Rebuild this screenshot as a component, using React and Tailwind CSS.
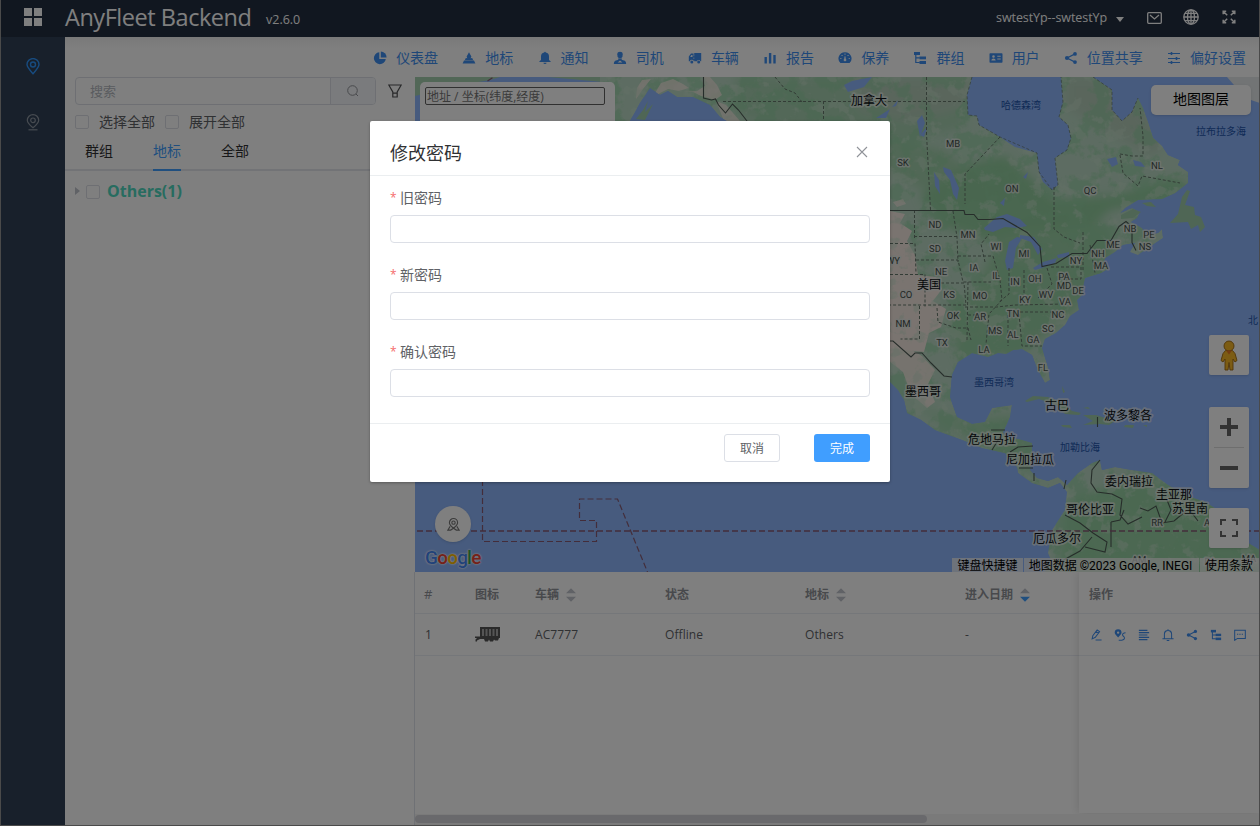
import React from "react";

const CJK = "font-['Open_Sans','Noto_Sans_CJK_SC',sans-serif]";

function Svg({ children, className = "", box = "0 0 14 14" }) {
  return (
    <svg viewBox={box} className={className} fill="none" stroke="none">
      {children}
    </svg>
  );
}

const NAV_ICONS = {
  pie: (
    <g fill="currentColor">
      <path d="M6.3 1.2A6 6 0 1 0 12.8 7.9H6.3z" />
      <path d="M7.8 .6v5.8h5.8A6 6 0 0 0 7.8 .6z" />
    </g>
  ),
  landmark: (
    <g fill="currentColor">
      <path d="M7 1.2 9.4 5.6 8.6 7.2 10.2 7 11.2 9.2H2.8L3.8 7 5.3 7.2 4.6 5.6z" />
      <path d="M2 9.4H12L13.4 12.4H.6z" />
    </g>
  ),
  bell: (
    <g fill="currentColor">
      <path d="M6.2 1.6a.8.8 0 0 1 1.6 0A4 4 0 0 1 11 5.6V9l1.6 1.2v.8H1.4v-.8L3 9V5.6a4 4 0 0 1 3.2-4z" />
      <path d="M5.4 11.8h3.2a1.6 1.3 0 0 1-3.2 0z" />
    </g>
  ),
  driver: (
    <g fill="currentColor">
      <path d="M4.3 3.2C4.3 1.6 5.4.8 7 .8s2.700.8 2.700 2.400L9.500 5.200C9.200 6.600 8.200 7.300 7 7.300S4.800 6.600 4.500 5.200z" />
      <path fillRule="evenodd" d="M5 7.500h4l-.4 1.300 3.200 1Q13.200 10.500 13.200 13H.8Q.8 10.500 2.200 9.800l3.200-1zM7 9.600 4.600 11.600h4.800z" />
    </g>
  ),
  truck: (
    <g fill="currentColor">
      <path d="M6.200 2h7v8.300h-.700a1.900 1.900 0 0 0-3.600 0H6.200z" />
      <path fillRule="evenodd" d="M5.600 2.400H3L.8 5.600v4.700h1.100a1.900 1.900 0 0 1 3.700 0zM4.500 4v2H2.200L3.400 4z" />
      <circle cx="3.800" cy="11" r="1.500" />
      <circle cx="10.700" cy="11" r="1.500" />
      <path d="M5 5.200h3v1.200H5zM5 8h4v1.200H5z" />
    </g>
  ),
  bars: (
    <g fill="currentColor">
      <rect x="1.500" y="6" width="2.400" height="6.500" />
      <rect x="5.900" y="2" width="2.400" height="10.500" />
      <rect x="10.300" y="4" width="2.400" height="8.500" />
    </g>
  ),
  gauge: (
    <path
      fill="currentColor"
      fillRule="evenodd"
      d="M7 1.200A6.300 6.300 0 0 0 2.400 12H11.600A6.300 6.300 0 0 0 7 1.200zM6.500 2.600h1v1.100h-1zM3.500 3.900h1.100V5H3.500zM9.500 3.900h1.100V5H9.500zM2.300 7h1.100v1H2.300zM10.700 7h1.100v1h-1.100zM6.600 5.200h.8l.4 2.700a1.300 1.300 0 1 1-1.600 0z"
    />
  ),
  tree: (
    <g fill="currentColor">
      <rect x="1" y="1" width="6" height="3" />
      <rect x="6.500" y="5.500" width="6.500" height="2.800" />
      <rect x="6.500" y="10" width="6.500" height="3" />
      <path d="M2.200 3.500h1.200v2.800h3.400v1.200H3.400v3.400h3.400v1.200H2.200z" />
    </g>
  ),
  card: (
    <path
      fill="currentColor"
      fillRule="evenodd"
      d="M1.200 2.200h11.600q.700 0 .700.700v8.200q0 .700-.700.700H1.200q-.700 0-.700-.700V2.900q0-.700.700-.700zM4.500 4.200a1.300 1.300 0 0 0 0 2.600 1.300 1.300 0 0 0 0-2.600zM2.300 9.400h4.400q-.200-2-2.200-2t-2.200 2zM8.300 4.800v1h3.400v-1zM8.300 7.400v1h3.400v-1z"
    />
  ),
  share: (
    <g fill="currentColor">
      <circle cx="3" cy="7" r="2.100" />
      <circle cx="11" cy="2.900" r="1.900" />
      <circle cx="11" cy="11.100" r="1.900" />
      <path d="M3 7 11 2.900M3 7l8 4.100" stroke="currentColor" strokeWidth="1.200" />
    </g>
  ),
  sliders: (
    <g stroke="currentColor">
      <path d="M1 2.500h12M1 7.500h12M1 11.500h12" strokeWidth="1" />
      <path d="M4.500 1v3M9.500 6v3M4.500 10v3" strokeWidth="1.600" />
    </g>
  ),
};

const NAV = [
  ["pie", "仪表盘"],
  ["landmark", "地标"],
  ["bell", "通知"],
  ["driver", "司机"],
  ["truck", "车辆"],
  ["bars", "报告"],
  ["gauge", "保养"],
  ["tree", "群组"],
  ["card", "用户"],
  ["share", "位置共享"],
  ["sliders", "偏好设置"],
];

function Header() {
  return (
    <header className="flex h-[37px] shrink-0 items-center bg-[#222e40] text-white">
      <svg viewBox="0 0 18 18" className="ml-[23px] mb-[3px] h-[18px] w-[18px]" fill="#fff">
        <rect width="8" height="8" />
        <rect x="10" width="8" height="8" />
        <rect y="10" width="8" height="8" />
        <rect x="10" y="10" width="8" height="8" />
      </svg>
      <div className="ml-[23px] mb-[4px] w-[201px] whitespace-nowrap text-[23.500px] leading-8 tracking-[-0.460px]">AnyFleet Backend</div>
      <div className="mt-1 text-[12.500px]">v2.6.0</div>
      <div className="ml-auto flex items-center">
        <span className="text-[12.500px] tracking-[-0.080px]">swtestYp--swtestYp</span>
        <svg viewBox="0 0 8 5" className="ml-[9px] mt-px h-[5px] w-2" fill="#fff"><path d="M0 0h8L4 5z" /></svg>
        <svg viewBox="0 0 15 12" className="ml-[23px] mb-[2px] h-3 w-[15px]" fill="none" stroke="#fff" strokeWidth="1.300">
          <rect x=".7" y=".7" width="13.600" height="10.600" rx="1" />
          <path d="m3 3 4.500 4L12 3" />
        </svg>
        <svg viewBox="0 0 16 16" className="ml-[21px] mb-[3px] h-4 w-4" fill="none" stroke="#fff" strokeWidth="1.300">
          <circle cx="8" cy="8" r="7.200" />
          <ellipse cx="8" cy="8" rx="3.500" ry="7.200" />
          <path d="M8 .8v14.400M.8 8h14.400M2 4.300h12M2 11.700h12" />
        </svg>
        <svg viewBox="0 0 14 14" className="ml-[23px] mr-[23px] mb-[3px] h-[14px] w-[14px]" fill="none" stroke="#fff" strokeWidth="1.500">
          <path d="m5.200 5.200-4-4m0 3V1.200h3M8.800 5.200l4-4m-3 0h3v3M5.200 8.800l-4 4m0-3v3h3M8.800 8.800l4 4m0-3v3h-3" />
        </svg>
      </div>
    </header>
  );
}

function Sidebar() {
  return (
    <aside className="flex w-16 shrink-0 flex-col items-center bg-[#304156]">
      <svg viewBox="0 0 14 17" className="mt-[21px] h-[17px] w-[14px]" fill="none" stroke="#2f96ff" strokeWidth="1.400">
        <path d="M7 15.800C3.500 12 1 9.300 1 6.600a6 6 0 0 1 12 0c0 2.700-2.500 5.400-6 9.200z" />
        <circle cx="7" cy="6.500" r="2.500" />
      </svg>
      <svg viewBox="0 0 14 17" className="mt-[39px] h-[17px] w-[14px]" fill="none" stroke="#8f97a3" strokeWidth="1.200">
        <path d="M7 13.800C3.500 11 1.300 8.800 1.300 6.300a5.700 5.700 0 0 1 11.400 0c0 2.500-2.200 4.700-5.700 7.500z" />
        <circle cx="7" cy="6.300" r="2.300" />
        <path d="M2.500 15.800h9" />
      </svg>
    </aside>
  );
}

function Check() {
  return <span className="h-[14px] w-[14px] shrink-0 rounded-[2px] border border-[#dcdfe6] bg-white" />;
}

function Panel() {
  return (
    <section className="w-[350px] shrink-0">
      <div className="flex items-center pl-[10px]">
        <div className="flex h-[28px] w-[301px] overflow-hidden rounded-[4px] border border-[#dcdfe6]">
          <div className="flex-1 pl-[14px] text-[13px] leading-[27px] text-[#b4b8c0]">搜索</div>
          <div className="flex w-[45px] items-center justify-center border-l border-[#dcdfe6] bg-[#f5f7fa]">
            <svg viewBox="0 0 12 12" className="h-3 w-3" fill="none" stroke="#909399"><circle cx="5.500" cy="5.500" r="4.800" /><path d="m9 9 2 2" /></svg>
          </div>
        </div>
        <svg viewBox="0 0 14 14" className="ml-3 h-[14px] w-[14px]" fill="none" stroke="#505153" strokeWidth="1.200">
          <path d="M.8 1h12.400L9.200 8v5H4.800V8zM4.800 9.200h4.400" />
        </svg>
      </div>
      <div className="flex h-[34px] items-center pl-[10px] text-[14px] text-[#606266]">
        <Check /><span className="mb-[2px] ml-[10px] mr-[10px]">选择全部</span>
        <Check /><span className="mb-[2px] ml-[10px]">展开全部</span>
      </div>
      <div className="flex h-[32px] border-b-2 border-[#e4e7ed] pl-5 text-[14px] leading-[24px] text-[#303133]">
        <span className="h-[32px]">群组</span>
        <span className="mx-10 h-[32px] border-b-2 border-[#409eff] text-[#409eff]">地标</span>
        <span className="h-[32px]">全部</span>
      </div>
      <div className="flex h-[40px] items-center pl-[10px]">
        <svg viewBox="0 0 5 8" className="h-2 w-[5px]" fill="#c0c4cc"><path d="M0 0v8l5-4z" /></svg>
        <span className="ml-[6px] mt-[1px] flex"><Check /></span>
        <span className="ml-[7px] text-[16px] font-bold text-[#4fd8c0]">Others(1)</span>
      </div>
    </section>
  );
}

const MAINLAND =
  "M600 77H1093L1112 90 1112 110 1122 121 1132 112 1138 98 1143 108 1148 122 1153 138 1162 146 1168 155 1180 160 1178 165 1188 172 1188 183 1175 193 1162 199 1138 200 1125 208 1112 222 1100 234 1106 228 1118 214 1132 208 1140 212 1137 218 1131 222 1142 228 1146 235 1158 233 1162 229 1163 238 1148 248 1138 255 1130 252 1135 243 1123 245 1115 252 1105 258 1103 264 1109 268 1101 273 1085 278 1083 287 1082 295 1077 300 1079 310 1070 316 1065 325 1056 333 1045 339 1042 348 1048 367 1050 380 1045 383 1038 370 1032 355 1022 349 1013 350 1006 354 998 353 988 357 972 353 958 362 952 375 950 397 957 417 972 424 985 422 992 408 1012 405 1010 417 1003 432 1005 437 1018 439 1032 443 1032 453 1030 470 1037 478 1048 481 1058 477 1067 485 1078 473 1092 463 1100 460 1102 470 1115 467 1132 470 1152 473 1168 485 1185 495 1205 502 1218 510 1238 537 1260 550V572H1045L1050 558 1048 553 1052 530 1065 510 1067 492 1060 483 1048 488 1032 483 1018 473 1017 467 1005 453 982 448 962 440 935 430 921 420 907 413 904 400 898 390 880 372V121H727L720 117 710 105 693 97 677 97 668 91 660 95 650 88 640 103 630 121H600z";

const LABELS = [
  ["MB", 953, 147], ["SK", 903, 166], ["ON", 1012, 192], ["QC", 1090, 194], ["NL", 1157, 169],
  ["ND", 935, 228], ["MN", 968, 238], ["SD", 935, 252], ["WI", 996, 250], ["MI", 1024, 257],
  ["NB", 1130, 232], ["PE", 1149, 238], ["NS", 1145, 250], ["ME", 1113, 248], ["NH", 1098, 257],
  ["NY", 1076, 264], ["MA", 1101, 269], ["NE", 941, 275], ["IA", 974, 271], ["IL", 996, 279],
  ["IN", 1015, 285], ["OH", 1035, 282], ["PA", 1064, 280], ["MD", 1064, 289], ["DE", 1078, 294],
  ["WV", 1046, 298], ["VA", 1065, 305], ["KY", 1025, 303], ["CO", 906, 298], ["KS", 949, 298],
  ["MO", 980, 299], ["NM", 903, 327], ["OK", 953, 319], ["AR", 980, 320], ["TN", 1013, 317],
  ["NC", 1058, 318], ["SC", 1048, 332], ["MS", 995, 334], ["AL", 1013, 338], ["GA", 1033, 343],
  ["TX", 942, 346], ["LA", 984, 353], ["FL", 1043, 371], ["WY", 893, 264], ["RR", 1157, 526],
  ["AM", 1139, 563], ["A", 1207, 526], ["PA", 1210, 565], ["MA", 1249, 562],
];
const COUNTRIES = [
  ["加拿大", 869, 105], ["美国", 929, 289], ["墨西哥", 923, 396], ["古巴", 1057, 410],
  ["波多黎各", 1128, 420], ["危地马拉", 992, 444], ["尼加拉瓜", 1030, 464], ["委内瑞拉", 1129, 486],
  ["圭亚那", 1174, 499], ["苏里南", 1190, 513], ["哥伦比亚", 1090, 514], ["厄瓜多尔", 1057, 543],
];
const SEAS = [["哈德森湾", 1021, 109], ["拉布拉多海", 1221, 135], ["墨西哥湾", 994, 386], ["加勒比海", 1080, 451], ["北", 1253, 324]];

function MapDrawing() {
  return (
    <svg viewBox="415 77 844 495" className="block h-[495px] w-[844px]">
      <defs>
        <clipPath id="land"><path d={MAINLAND} /></clipPath>
        <filter id="forest" x="0" y="0" width="1" height="1" colorInterpolationFilters="sRGB">
          <feTurbulence type="fractalNoise" baseFrequency="0.045" numOctaves="5" seed="8" />
          <feColorMatrix values="0 0 0 0 .58  0 0 0 0 .82  0 0 0 0 .64  9 0 0 0 -4.300" />
        </filter>
        <filter id="pale" x="0" y="0" width="1" height="1" colorInterpolationFilters="sRGB">
          <feTurbulence type="fractalNoise" baseFrequency="0.07" numOctaves="4" seed="3" />
          <feColorMatrix values="0 0 0 0 .78  0 0 0 0 .88  0 0 0 0 .8  0 9 0 0 -5.200" />
        </filter>
        <filter id="soft"><feGaussianBlur stdDeviation="5" /></filter>
      </defs>
      <rect x="415" y="77" width="845" height="495" fill="#8eb6fc" />
      <path d="M415 77h85l-10 3-35 6-40 10zM548 77h60l-5 5z" fill="#a5cfae" />
      <path d="M600 77h50l-12 20-10 24h-28z" fill="#a5cfae" />
      <path d="M1227 77h33v26l-12-4-14-14z" fill="#e4e8ea" />
      <g clipPath="url(#land)">
        <path d={MAINLAND} fill="#bad9c4" />
        <g filter="url(#soft)">
          <path d="M735 77h230v50l-75 20-155-30z" fill="#a6d0b0" />
          <path d="M885 140l60 10 35 30-8 28-27-10-60-25z" fill="#a3d0ac" />
          <path d="M965 165l40-10 50 45 60-5 50-15 25 0-20 20-60 10-50 50-60-15-60-20-20-30z" fill="#93cd9e" />
          <path d="M1000 235l110-10 5 40-45 50-50 40-60 5-15-50 30-20z" fill="#9bd0a6" />
          <path d="M1065 77h50l50 60-10 20-40-20-50-30z" fill="#b4cdb9" />
          <path d="M850 77h120v30l-60 15-50-10z" fill="#b4cdb9" />
          <path d="M1068 500l60-20 80 10 52 60v30h-205z" fill="#98d1a4" />
          <path d="M905 400l50 20 60-5 30 65-50-25z" fill="#a0d3ab" />
        </g>
        <rect x="600" y="77" width="660" height="495" filter="url(#forest)" opacity=".6" />
        <g fill="#f5e9e1">
          <path d="M885 210l20 4-5 9 12 8-5 10 8 14 3 20 18 2 6 12-9 12 13 8-5 18-12 6-5 19-39-4z" />
          <path d="M885 341l20 5 17 10 13 14-7 14 7 18-8 6-16-14-8-22-18-14z" opacity=".85" />
          <path d="M637 88l5-8 9-1-8 10-7 10zM658 88l3-5 12-4 10 5 6 4-10 3-11-2-8 4-8 6zM683 92l14-1 8-5-2-9h7l7 8 5 10-7 5-14-4-8-4z" opacity=".75" />
          <path d="M716 101l10 4 14 16h-16zM893 202l10-3 3 5-9 3z" opacity=".7" />
        </g>
        <rect x="600" y="77" width="660" height="495" filter="url(#pale)" opacity=".5" />
      </g>
      {/* inland waters */}
      <g fill="#8eb6fc">
        <path d="M972 77 967 95 968 115 977 116 979 125 1000 137 1015 147 1037 153 1039 172 1043 182 1052 190 1058 185 1055 158 1067 150 1071 138 1068 125 1059 117 1063 102 1061 77z" />
        <path d="M984 228l13-11 10-3 13 5 7 7-10 2-12-1-12 5-8-2zM1009 242l8-5 5 1-6 10-3 20-6 2-2-9zM1020 235l14 2 8 12-4 6-7-13-11-4zM1033 268l10-6 14-4-2 5-13 5-7 2zM1057 255l12-3v5l-11 1z" />
        <path d="M943 167l8 3 8 18-2 12-4-6-3-14-6-8zM934 172l5 8 1 14-5-8zM928 126l-8 9 4 2zM844 85l8-4 20-4-8 10-16 5zM876 118l14-9-4 9zM917 121l5-6 3 8-5 14zM898 100l-6 7 4-1zM1107 159l9-2 2 7-6 3zM1133 160l8 2 4 5-10-1zM1000 203l5-5-1 8zM1028 172l-5 5 3 2z" />
      </g>
      <g fill="#9ecdaa">
        <path d="M1187 190l3 1-5 14 9 2 1 8 6 2 4 10-5 5-2-7-7 4-3-7-18 1 8-9 4-17z" />
        <path d="M1121 215l12-6 8 3-8 6-12 1zM1142 203l9-1 5 5-9-1z" />
        <path d="M1025 401l8-5 15 1 15 6 9 8 9 2-2 2-14-1-7-8-19-7-12 3zM1083 415l13 0 19 6-6 4-9-1-17 1 10-4zM1061 425l9 0 2 3-9-1zM1125 425h9l-1 3-9-1zM1062 386l3 6-2 1zM1143 425l4 0 0 2zM1083 408l5-1 2 2z" />
        <path d="M636 119l7-9 5-9-3 11 8-8-8 16z" />
      </g>
      {/* province and state lines */}
      <g fill="none" stroke="#66796c" strokeWidth="1" strokeDasharray="3 2">
        <path d="M723 101.500H965M823.500 101v20M775 77l10 12 10 4 7 9M926.500 77v57l4 76M1000 137l-35 37v30M1054 187v42l10 8 16 6M953 211l4 26 1 25M914.500 210v30M914 236.500h44M885 243.500h30l1 30M916 260h42l5 22h28M885 274.500h40v32M926 283h38l2 22h-81M919.500 306v33h-19M937 308l1 14 18 6h12l3 12M968 282l-1 58M958 256h35M993 256l7 24 2 20-13 14-4 40M965 307h32l18-2 50-1M968 315h20M1009 268v26l-10 8M1024 270v25M1047 268l5 16-14 14M1051 267h30v12h-15M1020 312h45M1008 315v31M1019 314l3 32h20M985 262l-4-18 8-10M1083 270v-38M1120 154l12 2h11V136l-3-28M1120 155l3 18 15 13 4-10 38 7M1090 245l5 28" />
        <path d="M972 77 967 95 968 115 977 116 979 125 1000 137 1037 153 1039 172 1052 190 1058 185 1055 158 1067 150 1071 138 1068 125 1059 117 1063 102 1061 77M1093 77l19 13v20l10 11 10-9 6-14" strokeOpacity=".7" />
      </g>
      <g fill="none" stroke="#4d5a54" strokeWidth="1.100">
        <path d="M703.500 77v21l8 2 4-1 3 6 7 8 7-9 6 6 10 13M885 210.500h79l1 4 9 0 4 5 12 0 13-1 24 14 13 14 2 20 14-3 16-10 15 0 10-13h14l8-14 7-5 6 5v16l4 8M885 341h8l18 16 4-4h7l9 10 13 13 8 1" />
        <path d="M1005 430h-14M1000 437l-8 13M1010 452l8-5 15-1M1019 468h14M1034 473v8M1064 489l2-9M1100 460l-8 10-1 13 6 9 15 2 10 5-2 16 8 9 14-7M1065 515l15 8 13 10 14 9-2 10-20-5M1060 562l20-11 12-14M1111 522l9-2 4-10M1111 522v25M1140 508l8 3 8-5 6 17 12-2 12-10M1167 500l4 10-6 12M1186 505l12 16M1097.500 417v10" />
      </g>
      {/* time zone boundaries */}
      <g fill="none" stroke="#865b75" strokeDasharray="6 3">
        <path d="M417 531H1260" strokeWidth="1.600" />
        <path d="M482.500 480v61.500h114v-21h-17v-21.500h38l30 73M480 86l15-10" strokeWidth="1.200" />
      </g>
      <g className="font-['Roboto','Noto_Sans_CJK_SC',sans-serif]" textAnchor="middle">
        <g fontSize="9.500" fontWeight="400" fill="#454f4b" stroke="#e6ebe7" strokeWidth="3" strokeOpacity=".75" paintOrder="stroke" strokeLinejoin="round">
          {LABELS.map(([t, x, y], i) => <text key={i} x={x} y={y} style={{ paintOrder: "stroke" }}>{t}</text>)}
        </g>
        <g fontSize="12" fontWeight="400" fill="#0c1014" stroke="#eef2ef" strokeWidth="3.500" strokeOpacity=".65" strokeLinejoin="round">
          {COUNTRIES.map(([t, x, y]) => <text key={t} x={x} y={y} style={{ paintOrder: "stroke" }}>{t}</text>)}
        </g>
        <g fontSize="10" fill="#1e55ac">
          {SEAS.map(([t, x, y]) => <text key={t} x={x} y={y}>{t}</text>)}
        </g>
      </g>
    </svg>
  );
}

function MapView() {
  return (
    <div className="relative h-[495px] shrink-0 overflow-hidden">
      <MapDrawing />
      <div className="absolute left-[5px] top-[5px] h-[60px] w-[195px] rounded-[5px] bg-white p-[5px]">
        <div className="h-[18px] w-[180px] rounded-[2px] border border-[#606060] pl-px text-[12px] leading-[17px] text-[#757575]">地址 / 坐标(纬度,经度)</div>
      </div>
      <div className="absolute right-[8px] top-[8px] h-[30px] w-[100px] rounded-[5px] bg-white text-center text-[14px] leading-[28px] text-black shadow">地图图层</div>
      <div className="absolute left-[20px] top-[429px] flex h-[36px] w-[36px] items-center justify-center rounded-full bg-white shadow">
        <svg viewBox="0 0 14 14" className="h-[13px] w-[13px]" fill="none" stroke="#777" strokeWidth="1.200">
          <path d="M7 11C4 8.500 2.600 7 2.600 5a4.400 4.400 0 0 1 8.800 0c0 2-1.400 3.500-4.400 6z" />
          <circle cx="7" cy="5" r="1.800" />
          <path d="M3.400 9 1 13h3l3-2 3 2h3l-2.400-4" />
        </svg>
      </div>
      <div className="absolute left-[10px] top-[468px] text-[19px] font-medium leading-[26px] tracking-[-0.800px] font-['Roboto',sans-serif] [text-shadow:0_0_2px_#fff,0_0_2px_#fff]">
        <span className="text-[#4285f4]">G</span><span className="text-[#ea4335]">o</span><span className="text-[#fbbc05]">o</span><span className="text-[#4285f4]">g</span><span className="text-[#34a853]">l</span><span className="text-[#ea4335]">e</span>
      </div>
      <div className="absolute right-[10px] top-[258px] flex h-10 w-10 items-center justify-center rounded-[2px] bg-white shadow">
        <svg viewBox="0 0 18 30" className="h-[31px] w-[18px]" fill="#f8b827" stroke="#a06a10" strokeWidth=".9">
          <path d="M5.500 10h7l2.500 3 2 7-2 1.500-2-3V29.500H10L9 22l-1 7.500H5V18.500l-2 3-2-1.500 2-7z" />
          <circle cx="9" cy="5.500" r="5" />
          <path d="m6 10 3 4 3-4z" fill="#e87722" stroke="none" />
        </svg>
      </div>
      <div className="absolute right-[10px] top-[330px] h-[81px] w-10 rounded-[2px] bg-white shadow">
        <svg viewBox="0 0 40 81" className="h-[81px] w-10"><path d="M11 20h18M20 11v18M11 61h18" stroke="#666" strokeWidth="4" /><path d="M5 40.500h30" stroke="#ddd" /></svg>
      </div>
      <div className="absolute right-[10px] top-[431px] h-10 w-10 rounded-[2px] bg-white shadow">
        <svg viewBox="0 0 40 40" className="h-10 w-10" fill="none" stroke="#666" strokeWidth="2"><path d="M12 17v-5h5M23 12h5v5M28 23v5h-5M17 28h-5v-5" /></svg>
      </div>
      <div className="absolute bottom-0 right-0 flex h-[14px] gap-[1px] whitespace-nowrap text-[12px] leading-[16px] text-black font-['Roboto','Noto_Sans_CJK_SC',sans-serif]">
        <span className="w-[71px] bg-[#f5f5f5]/75 text-center">键盘快捷键</span>
        <span className="w-[175px] bg-[#f5f5f5]/75 pr-[2px] text-center">地图数据 ©2023 Google, INEGI</span>
        <span className="w-[59px] bg-[#f5f5f5]/75 pr-px text-center">使用条款</span>
      </div>
    </div>
  );
}

function Sort({ active }) {
  return (
    <svg viewBox="0 0 10 14" className="ml-[7px] h-[14px] w-[10px]">
      <path d="M0 5.200h10L5 .2z" fill="#c0c4cc" />
      <path d="M0 8.800h10L5 13.800z" fill={active ? "#409eff" : "#c0c4cc"} />
    </svg>
  );
}

const ROW_ICONS = [
  <path stroke="currentColor" strokeWidth="1.200" d="m2.500 11.500.8-3.800L8.300 1l2.900 2.100-5 6.600-3.700 1.800zM7 2.700 9.900 5M6.500 12.800H13.500" />,
  <g><path fill="currentColor" fillRule="evenodd" d="M4.800 9.800C2 7 .8 5.600.8 4.200a4 4 0 0 1 8 0c0 1.400-1.200 2.800-4 5.600zM4.800 2.800a1.400 1.400 0 0 0 0 2.800 1.400 1.400 0 0 0 0-2.800z" /><path stroke="currentColor" strokeWidth="1.200" d="M13.500 4.500q-4 .5-3.500 2.500.5 1.500 2 2.500 1 3-3 3.500H5.500" /></g>,
  <path stroke="currentColor" strokeWidth="1.400" d="M1 1.500h10M1 4.200h12M1 7h10M1 9.800h12M1 12.500h10" />,
  <path stroke="currentColor" strokeWidth="1.200" d="M.5 11.500h13M2.800 11.500V6a4.200 4.200 0 0 1 8.400 0v5.500M7 .3v1.500M5.500 13.400h3" />,
  NAV_ICONS.share,
  NAV_ICONS.tree,
  <path stroke="currentColor" strokeWidth="1.200" d="M.8 1.500h12.400v9.500H4L.8 13.200zM3.500 6h1.500M6.200 6h1.500M9 6h1.500" />,
];

function DataTable() {
  return (
    <div className="-ml-px flex min-h-0 flex-1 flex-col border-l border-[#dfe2ea]">
      <div className="flex min-h-0 flex-1">
        <div className="flex-1 overflow-hidden">
          <div className="flex h-[42px] items-center border-b border-[#ebeef5] pt-[5px] text-[12px] font-bold text-[#909399]">
            <span className="w-[60px] pl-[9px] text-[13px] font-normal">#</span>
            <span className="w-[60px]">图标</span>
            <span className="flex w-[130px] items-center">车辆<Sort /></span>
            <span className="w-[140px]">状态</span>
            <span className="flex w-[160px] items-center">地标<Sort /></span>
            <span className="flex items-center">进入日期<Sort active /></span>
          </div>
          <div className="flex h-[42px] items-center border-b border-[#ebeef5] text-[12px] tracking-[0.080px] text-[#606266]">
            <span className="w-[60px] pl-[10px]">1</span>
            <span className="w-[60px]">
              <svg viewBox="0 0 26 15" className="h-[15px] w-[26px]" fill="#555">
                <path d="M5 0h20v11H24l-1 2.500h-3l-1-1-1 2h-3l-1-2-1 2h-3l-1-2.500H5l-3 1.500v1H.5v-2L2 11H0V9.500h5z" />
                <path fill="#aaa" d="M7 2h2v7H7zM10.500 2h2v7h-2zM14 2h2v7h-2zM17.500 2h2v7h-2zM21 2h2v7h-2z" />
              </svg>
            </span>
            <span className="w-[130px]">AC7777</span>
            <span className="w-[140px]">Offline</span>
            <span className="w-[160px]">Others</span>
            <span>-</span>
          </div>
        </div>
        <div className="mb-px w-[180px] shrink-0 shadow-[0_0_10px_rgba(0,0,0,0.14)]">
          <div className="flex h-[42px] items-center border-b border-[#ebeef5] pl-[10px] pt-[5px] text-[12px] font-bold text-[#909399]">操作</div>
          <div className="flex h-[42px] items-center gap-[12px] border-b border-[#ebeef5] pl-[11px] text-[#3f8ff0]">
            {ROW_ICONS.map((icon, i) => <Svg key={i} className="h-[12px] w-[12px]">{icon}</Svg>)}
          </div>
        </div>
      </div>
      <div className="h-[11px] shrink-0 bg-[#f5f5f5] pt-px">
        <div className="h-[8px] w-[512px] rounded-full bg-[#d2d3d8]" />
      </div>
    </div>
  );
}

function Field({ label }) {
  return (
    <label className="mb-[20px] block">
      <span className="flex h-[37px] items-start pt-[9px] text-[14px] leading-[22px] text-[#606266]">
        <span className="mr-1 w-[6px] text-[12px] text-[#f56c6c]">*</span>{label}
      </span>
      <input type="password" className="block h-[28px] w-full rounded-[4px] border border-[#dcdfe6] px-3 outline-none" />
    </label>
  );
}

function Dialog() {
  return (
    <div className="absolute inset-0 flex items-start justify-center bg-black/50 pt-[121px]">
      <div role="dialog" className="h-[361px] w-[520px] rounded-[2px] bg-white shadow-[0_1px_3px_rgba(0,0,0,0.3)]">
        <div className="flex h-[55px] items-center justify-between border-b border-[#ebeef0] px-5 pt-[9px]">
          <h2 className="text-[18px] leading-6 text-[#303133]">修改密码</h2>
          <svg viewBox="0 0 12 12" className="mr-[2px] mb-[2px] h-3 w-3" stroke="#909399" strokeWidth="1.100"><path d="m1 1 10 10M11 1 1 11" /></svg>
        </div>
        <form className="h-[248px] border-b border-[#ebeef0] px-5 pt-[2px]">
          <Field label="旧密码" />
          <div className="-mt-2"><Field label="新密码" /></div>
          <div className="-mt-2"><Field label="确认密码" /></div>
        </form>
        <div className="flex justify-end gap-[34px] px-5 pt-[10px] text-[12px]">
          <button className="h-[28px] w-[56px] rounded-[3px] border border-[#dcdfe6] pt-[2px] text-[#606266]">取消</button>
          <button className="h-[28px] w-[56px] rounded-[3px] bg-[#409eff] pt-[2px] text-white">完成</button>
        </div>
      </div>
    </div>
  );
}

export default function App() {
  return (
    <div className={`relative flex h-[826px] w-[1260px] flex-col overflow-hidden border-x border-b border-[#4a4a4a] bg-white ${CJK}`}>
      <Header />
      <div className="flex min-h-0 flex-1">
        <Sidebar />
        <main className="flex min-w-0 flex-1 flex-col">
          <nav className="flex h-[40px] shrink-0 items-center justify-end gap-[24.200px] bg-linear-to-b from-[#f3f3f3] to-white to-30% pr-[13px] text-[14px] text-[#3f8ff0]">
            {NAV.map(([icon, text]) => (
              <a key={text} className="flex shrink-0 items-center gap-[9px]">
                <Svg className="mt-[2px] h-[14px] w-[14px]">{NAV_ICONS[icon]}</Svg>
                {text}
              </a>
            ))}
          </nav>
          <div className="flex min-h-0 flex-1">
            <Panel />
            <div className="flex min-w-0 flex-1 flex-col">
              <MapView />
              <DataTable />
            </div>
          </div>
        </main>
      </div>
      <Dialog />
    </div>
  );
}
